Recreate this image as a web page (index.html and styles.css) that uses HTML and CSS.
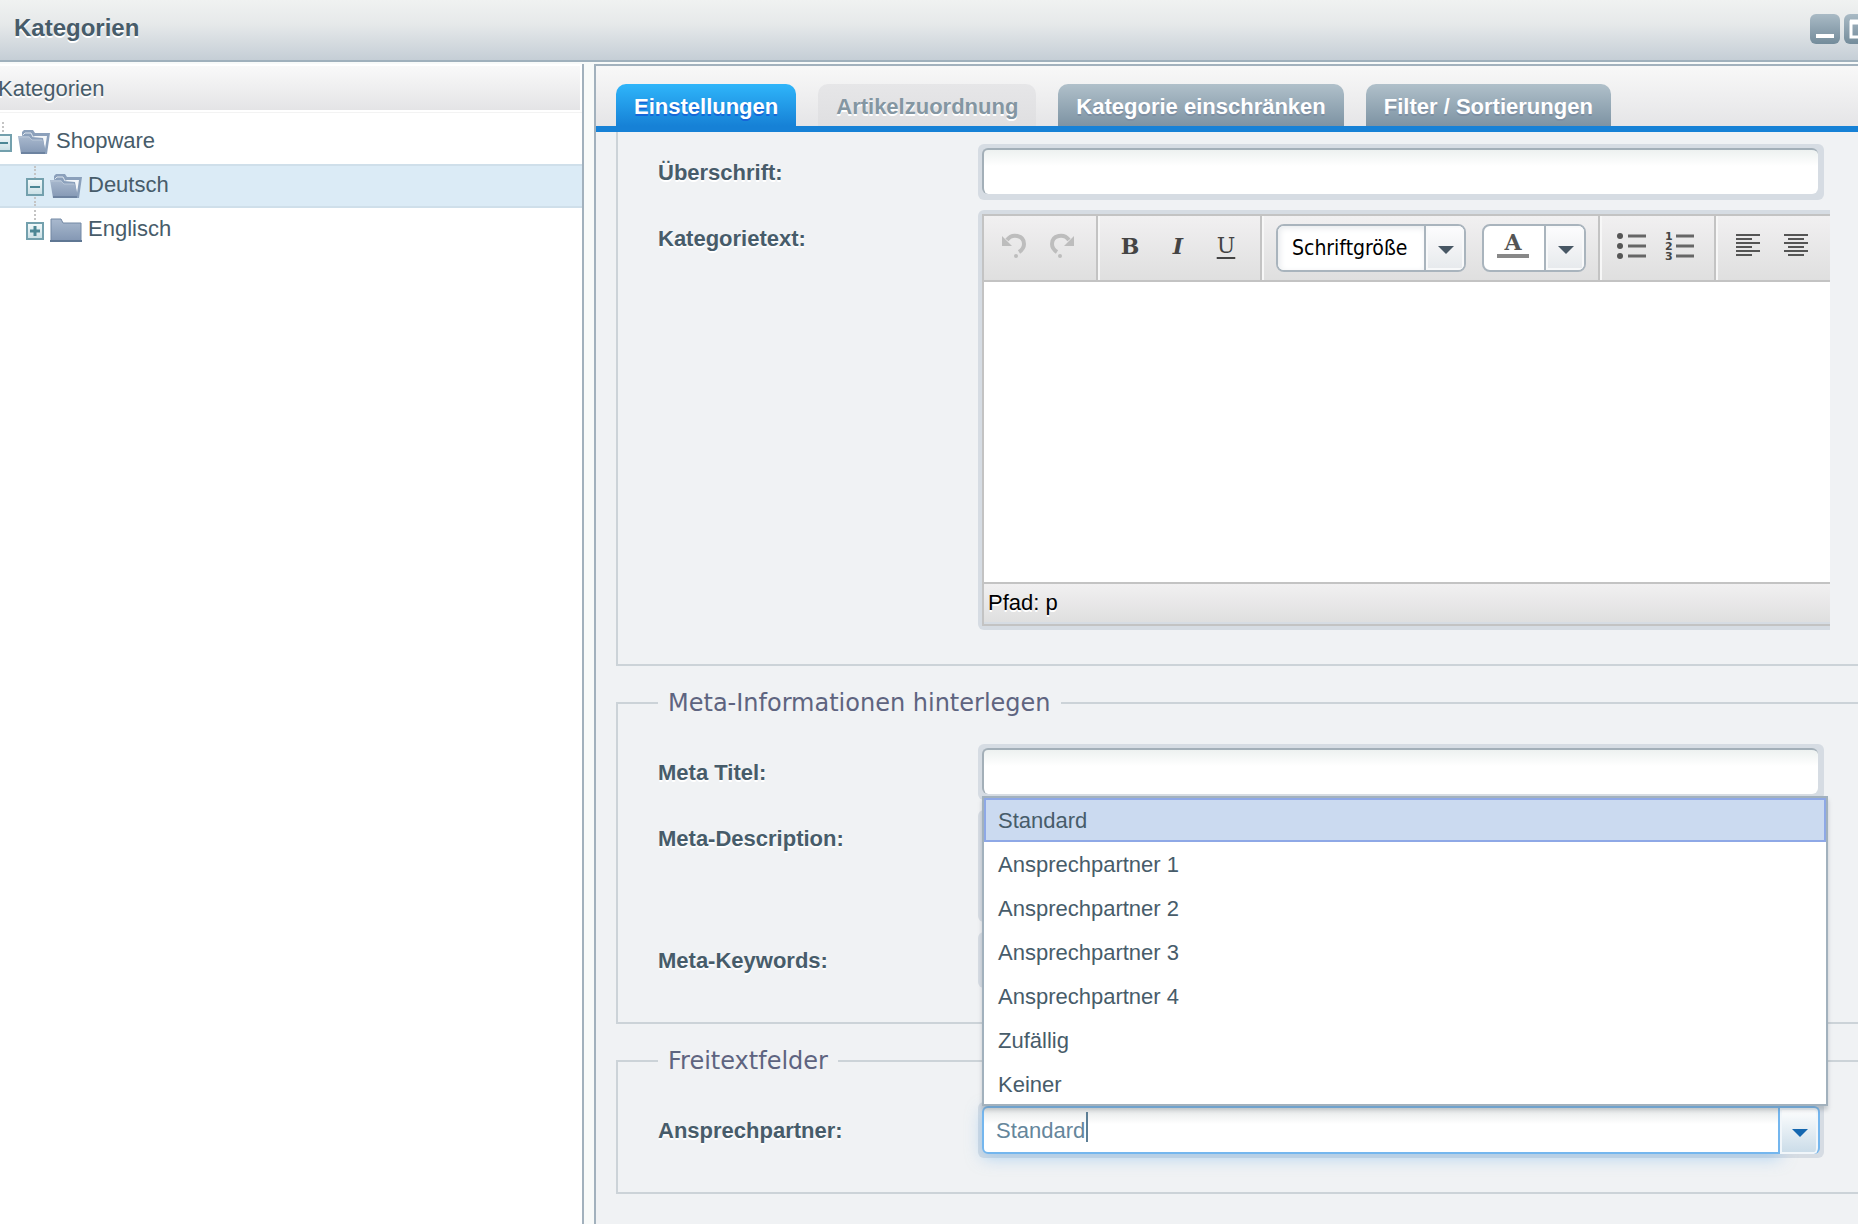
FILE: index.html
```html
<!DOCTYPE html>
<html lang="de">
<head>
<meta charset="utf-8">
<title>Kategorien</title>
<link rel="stylesheet" href="styles.css">
</head>
<body>
<svg class="defs" aria-hidden="true">
  <defs>
    <linearGradient id="folder-fill" x1="0" y1="0" x2="0" y2="1">
      <stop offset="0" stop-color="#a9b9ce"/><stop offset="1" stop-color="#8397b3"/>
    </linearGradient>
    <linearGradient id="toggle-fill" x1="0" y1="0" x2="0" y2="1">
      <stop offset="0" stop-color="#f4fafb"/><stop offset="1" stop-color="#c9dfe5"/>
    </linearGradient>
    <symbol id="folder-open" viewBox="0 0 32 26">
      <path d="M4 6V3l2-2h9l2 3h15l-3 21H12z" fill="#8ba0bb"/>
      <path d="M17 7h12l-2 13-2-11-11-1z" fill="#f4f7fa"/>
      <path d="M5 6l2-2h6l2 4" fill="none" stroke="#dde5ee" stroke-width="1"/>
      <path d="M0 7h11l3 4h11l2 9 0 5H3z" fill="url(#folder-fill)"/>
      <path d="M1 8h10l3 3h10" fill="none" stroke="#b9c7d8"/>
      <path d="M3 24h24" stroke="#6d83a0" stroke-width="2"/>
    </symbol>
    <symbol id="folder-closed" viewBox="0 0 32 26">
      <path d="M1 2h10l2 4h18v18H1z" fill="url(#folder-fill)" stroke="#7388a4"/>
      <path d="M0 24h32" stroke="#5f7793" stroke-width="2"/>
    </symbol>
    <symbol id="minus" viewBox="0 0 20 20">
      <rect x="2" y="2" width="16" height="16" fill="url(#toggle-fill)" stroke="#73a0ad" stroke-width="2"/>
      <path d="M5 10h10" stroke="#4c8795" stroke-width="2"/>
    </symbol>
    <symbol id="plus" viewBox="0 0 20 20">
      <rect x="2" y="2" width="16" height="16" fill="url(#toggle-fill)" stroke="#73a0ad" stroke-width="2"/>
      <path d="M5 10h10M10 5v10" stroke="#4c8795" stroke-width="3"/>
    </symbol>
    <symbol id="undo" viewBox="0 0 28 28">
      <path d="M7 8C12 1 24 3 24 12c0 4-2 6-5 8" fill="none" stroke="#bdbdbd" stroke-width="4"/>
      <path d="M2 4v10h10z" fill="#bdbdbd"/><circle cx="16" cy="24" r="2" fill="#bdbdbd"/>
    </symbol>
    <symbol id="arrow" viewBox="0 0 16 8">
      <path d="M0 0h16L8 8z" fill="currentColor"/>
    </symbol>
  </defs>
</svg>

<header class="titlebar">
  <h1 class="title">Kategorien</h1>
  <div class="window-tools">
    <button class="tool" type="button" aria-label="Minimieren"><svg viewBox="0 0 30 30"><path d="M6 22h18" stroke="#fff" stroke-width="4"/></svg></button>
    <button class="tool" type="button" aria-label="Maximieren"><svg viewBox="0 0 30 30"><path d="M7 8h16v15H7z" fill="none" stroke="#fff" stroke-width="3"/><path d="M6 8h18" stroke="#fff" stroke-width="5"/></svg></button>
  </div>
</header>

<div class="workspace">
  <nav class="sidebar">
    <h2 class="column-head">Kategorien</h2>
    <ul class="tree">
      <li class="node root"><svg class="toggle"><use href="#minus"/></svg><svg class="folder"><use href="#folder-open"/></svg><a class="node-link" href="#shopware">Shopware</a></li>
      <li class="node child through selected"><svg class="toggle"><use href="#minus"/></svg><svg class="folder"><use href="#folder-open"/></svg><a class="node-link" href="#deutsch">Deutsch</a></li>
      <li class="node child"><svg class="toggle"><use href="#plus"/></svg><svg class="folder"><use href="#folder-closed"/></svg><a class="node-link" href="#englisch">Englisch</a></li>
    </ul>
  </nav>

  <main class="panel">
    <div class="tabs" role="tablist">
      <button class="tab active" type="button" role="tab" aria-selected="true">Einstellungen</button>
      <button class="tab disabled" type="button" role="tab" disabled>Artikelzuordnung</button>
      <button class="tab" type="button" role="tab">Kategorie einschränken</button>
      <button class="tab" type="button" role="tab">Filter / Sortierungen</button>
    </div>

    <form class="form">
      <fieldset class="group continued">
        <div class="row">
          <label class="label" for="heading">Überschrift:</label>
          <div class="frame"><input class="text" id="heading" type="text"></div>
        </div>
        <div class="row">
          <label class="label" for="body-text">Kategorietext:</label>
          <div class="editor-frame">
            <div class="editor">
              <div class="toolbar">
                <div class="tool-group">
                  <button class="format" type="button" aria-label="Rückgängig"><svg class="icon"><use href="#undo"/></svg></button>
                  <button class="format" type="button" aria-label="Wiederholen"><svg class="icon mirrored"><use href="#undo"/></svg></button>
                </div>
                <div class="tool-group">
                  <button class="format bold" type="button">B</button>
                  <button class="format italic" type="button">I</button>
                  <button class="format underline" type="button">U</button>
                </div>
                <div class="tool-group pickers">
                  <div class="picker">
                    <select class="size-select" aria-label="Schriftgröße"><option>Schriftgröße</option></select>
                    <span class="picker-arrow"><svg class="arrow"><use href="#arrow"/></svg></span>
                  </div>
                  <div class="picker">
                    <button class="color" type="button" aria-label="Textfarbe"><span class="color-letter">A</span></button>
                    <button class="picker-arrow" type="button" aria-label="Farbe wählen"><svg class="arrow"><use href="#arrow"/></svg></button>
                  </div>
                </div>
                <div class="tool-group">
                  <button class="format" type="button" aria-label="Liste"><svg class="icon wide" viewBox="0 0 30 28"><g fill="#555"><circle cx="3" cy="4" r="3"/><circle cx="3" cy="14" r="3"/><circle cx="3" cy="24" r="3"/></g><path d="M11 4h18M11 14h18M11 24h18" stroke="#666" stroke-width="3"/></svg></button>
                  <button class="format" type="button" aria-label="Nummerierte Liste"><svg class="icon wide" viewBox="0 0 30 28"><g class="digits"><text x="0" y="8">1</text><text x="0" y="18">2</text><text x="0" y="28">3</text></g><path d="M11 4h18M11 14h18M11 24h18" stroke="#666" stroke-width="3"/></svg></button>
                </div>
                <div class="tool-group">
                  <button class="format" type="button" aria-label="Linksbündig"><svg class="icon" viewBox="0 0 28 28"><path d="M2 3h24M2 7h16M2 11h24M2 15h16M2 19h24M2 23h16" stroke="#555" stroke-width="2"/></svg></button>
                  <button class="format" type="button" aria-label="Zentriert"><svg class="icon" viewBox="0 0 28 28"><path d="M2 3h24M6 7h16M2 11h24M6 15h16M2 19h24M6 23h16" stroke="#555" stroke-width="2"/></svg></button>
                </div>
              </div>
              <textarea class="editor-area" id="body-text"></textarea>
              <div class="status">Pfad: p</div>
            </div>
          </div>
        </div>
      </fieldset>

      <fieldset class="group">
        <legend class="legend">Meta-Informationen hinterlegen</legend>
        <div class="row">
          <label class="label" for="meta-title">Meta Titel:</label>
          <div class="frame"><input class="text" id="meta-title" type="text"></div>
        </div>
        <div class="row">
          <label class="label" for="meta-description">Meta-Description:</label>
          <div class="frame"><textarea class="text tall" id="meta-description"></textarea></div>
        </div>
        <div class="row">
          <label class="label" for="meta-keywords">Meta-Keywords:</label>
          <div class="frame"><input class="text" id="meta-keywords" type="text"></div>
        </div>
      </fieldset>

      <fieldset class="group">
        <legend class="legend">Freitextfelder</legend>
        <div class="row">
          <label class="label" for="contact">Ansprechpartner:</label>
          <div class="combo">
            <input class="combo-input" id="contact" type="text" value="Standard" role="combobox" aria-expanded="true" aria-controls="contact-list">
            <span class="caret"></span>
            <button class="combo-button" type="button" aria-label="Liste öffnen"><svg class="arrow"><use href="#arrow"/></svg></button>
            <ul class="options" id="contact-list" role="listbox">
              <li class="option chosen" role="option" aria-selected="true">Standard</li>
              <li class="option" role="option">Ansprechpartner 1</li>
              <li class="option" role="option">Ansprechpartner 2</li>
              <li class="option" role="option">Ansprechpartner 3</li>
              <li class="option" role="option">Ansprechpartner 4</li>
              <li class="option" role="option">Zufällig</li>
              <li class="option" role="option">Keiner</li>
            </ul>
          </div>
        </div>
      </fieldset>
    </form>
  </main>
</div>
</body>
</html>
```
FILE: styles.css
```css
*, *::before, *::after { box-sizing: border-box; }

body {
  margin: 0;
  min-height: 100vh;
  display: flex;
  flex-direction: column;
  overflow: hidden;
  background: #f8faf9;
  color: #475c6a;
  font: 22px/26px "Liberation Sans", Arial, sans-serif;
}

button, input, textarea, select { margin: 0; font: inherit; color: inherit; border: 0; outline: 0; border-radius: 0; }
button { padding: 0; background: none; }
ul { margin: 0; padding: 0; list-style: none; }
svg { display: block; flex: none; }
.defs { position: absolute; width: 0; height: 0; }

/* Window title bar */
.titlebar {
  display: flex;
  align-items: center;
  height: 62px;
  padding: 0 0 2px 14px;
  overflow: hidden;
  border-bottom: 2px solid #9fb0bc;
  background: linear-gradient(#f0f2f1, #e6e9ea 40%, #c5ced6);
}
.title {
  flex: 1;
  margin: 0;
  padding-bottom: 2px;
  font-size: 24px;
  line-height: 28px;
  text-shadow: 0 2px 0 #fff;
}
.window-tools { display: flex; gap: 4px; margin-right: -16px; }
.tool { width: 30px; height: 30px; border-radius: 6px; background: linear-gradient(#a9bac5, #748c9b); }

.workspace {
  flex: 1;
  display: grid;
  grid-template-columns: 584px 1fr;
  column-gap: 10px;
  padding-top: 2px;
}

/* Category tree */
.sidebar { border-right: 2px solid #a2b1bd; background: #fff; }
.column-head {
  height: 48px;
  margin: 0;
  padding: 10px 0 0;
  border: solid #fff;
  border-width: 2px 2px 2px 0;
  background: linear-gradient(#f9f9f9, #e4e4e6);
  font-size: 22px;
  font-weight: 400;
  line-height: 26px;
  text-indent: -2px;
  text-shadow: 0 2px 0 #fff;
}
.tree { padding-top: 7px; border-top: 1px solid #f3f3f3; }
.node {
  display: flex;
  align-items: center;
  height: 44px;
  border: solid transparent;
  border-width: 2px 0;
}
.root { margin-left: -7px; }
.child { padding-left: 25px; }
.selected { border-color: #cfdfea; background-color: #dbebf6; }
.node::before {
  content: "";
  align-self: flex-start;
  height: 10px;
  margin-right: -11px;
  margin-left: 9px;
  border-left: 2px dotted #c4c4c4;
}
.through::before { height: 40px; }
.toggle { position: relative; width: 20px; height: 20px; margin: 2px 5px 0 0; }
.folder { width: 32px; height: 26px; margin-right: 6px; }
.node-link { margin-bottom: 2px; color: inherit; text-decoration: none; }

/* Right panel with tabs */
.panel {
  min-width: 0;
  border-top: 2px solid #a2b1bd;
  border-left: 2px solid #a2b1bd;
  background: #f0f2f4;
}
.tabs {
  display: flex;
  gap: 22px;
  height: 66px;
  padding: 18px 0 0 20px;
  border-bottom: 6px solid #1681d6;
  background: linear-gradient(#f8f8f8, #e5e5e7);
}
.tab {
  height: 42px;
  padding: 3px 18px 0;
  border-radius: 10px 10px 0 0;
  background: linear-gradient(#b0c0ca, #7d93a3);
  color: #fff;
  font-weight: 700;
  text-shadow: 0 2px 0 #7d8fa3;
  white-space: nowrap;
}
.active { background: linear-gradient(#2fb5fa, #1681d6); text-shadow: 0 2px 0 #1666d8; }
.disabled { background: linear-gradient(#e6e6e8, #dfdfe1); color: #8496a2; text-shadow: 0 2px 0 #fff; }

/* Form groups */
.form { padding-left: 20px; }
.group {
  min-width: 0;
  margin: 0 0 23px;
  padding: 27px 34px 34px 40px;
  border: 2px solid #ccd3d8;
  border-right: 0;
}
.continued { padding-top: 12px; border-top: 0; }
.legend {
  padding: 0 10px;
  color: #5e6480;
  font-family: "DejaVu Sans", Verdana, sans-serif;
  font-size: 24px;
  line-height: 28px;
}
.row { display: grid; grid-template-columns: 320px 1fr; }
.row + .row { margin-top: 10px; }
.label { padding-top: 16px; font-weight: 700; text-shadow: 0 2px 0 #fff; }
.frame { padding: 4px 6px 6px 4px; border-radius: 6px; background: #d6dce3; }
.text {
  display: block;
  width: 100%;
  height: 46px;
  padding: 0 12px;
  border: solid #a3afb8;
  border-width: 2px 0 0 2px;
  border-radius: 6px;
  background: linear-gradient(#edf1f0, #fff 16px);
}
.tall { height: 102px; resize: none; }

/* Rich text editor */
.editor-frame { margin-right: -6px; padding: 4px 0 4px 4px; border-radius: 6px 0 0 6px; background: #d6dce3; }
.editor { border: 2px solid #c3c3c3; border-right: 0; overflow: hidden; }
.toolbar {
  display: flex;
  height: 66px;
  border-bottom: 2px solid #c3c3c3;
  background: linear-gradient(#f1f0f1, #dfdfdf);
}
.tool-group {
  display: flex;
  align-items: center;
  padding: 0 10px 4px 6px;
  border-right: 2px solid #c3c3c3;
}
.tool-group + .tool-group { border-left: 2px solid #f7f7f7; }
.tool-group:last-child { border-right: 0; }
.format {
  display: flex;
  align-items: center;
  justify-content: center;
  width: 48px;
  height: 48px;
  color: #444;
  font-family: "DejaVu Serif", serif;
}
.bold { font-weight: 700; }
.italic { font-style: italic; font-weight: 700; }
.underline { text-decoration: underline; text-underline-offset: 4px; text-decoration-thickness: 2px; }
.icon { width: 28px; height: 28px; }
.wide { width: 30px; overflow: visible; }
.mirrored { transform: scaleX(-1); }
.digits { fill: #444; font: 700 11px "DejaVu Sans", sans-serif; }
.tool-group.pickers { gap: 16px; padding: 0 12px; }
.picker {
  display: flex;
  height: 48px;
  overflow: hidden;
  border: 2px solid #a9b4bd;
  border-radius: 8px;
  background: #fff;
}
.size-select {
  width: 146px;
  padding: 0 0 0 14px;
  appearance: none;
  background: #fff;
  color: #000;
  font-family: "DejaVu Sans Condensed", "DejaVu Sans", Tahoma, sans-serif;
  font-stretch: condensed;
  font-size: 21px;
  box-shadow: inset 2px 2px 6px #e6e9ec;
}
.picker-arrow {
  display: flex;
  align-items: center;
  justify-content: center;
  width: 40px;
  padding-left: 2px;
  border-left: 2px solid #a9b4bd;
  background: linear-gradient(#fdfdfe, #e6e9ec);
  box-shadow: inset 0 0 0 2px #f8f9fa;
  color: #475764;
}
.arrow { width: 16px; height: 8px; margin-top: 4px; }
.color {
  display: flex;
  align-items: flex-start;
  justify-content: center;
  width: 60px;
  padding: 6px 2px 0 0;
}
.color-letter {
  width: 32px;
  height: 26px;
  border-bottom: 4px solid #888;
  color: #555;
  font: 700 22px/20px "DejaVu Serif", serif;
}
.editor-area { display: block; width: 100%; height: 300px; padding: 8px; resize: none; background: #fff; }
.status {
  height: 42px;
  padding: 6px 4px;
  border-top: 2px solid #c3c3c3;
  border-bottom: 2px solid #d6dce3;
  background: linear-gradient(#f1f0f1, #dfdfdf);
  color: #000;
  text-shadow: 0 2px 0 #fff;
}

/* Open combo box */
.combo {
  position: relative;
  display: flex;
  padding: 4px;
  border-radius: 6px;
  background: #d6dce3;
}
.combo-input {
  flex: 1;
  min-width: 0;
  height: 48px;
  padding: 2px 12px 0;
  border: 2px solid #74b6ee;
  border-radius: 6px 0 0 6px;
  background: linear-gradient(#e3e6e6, #fff 16px);
  box-shadow: 0 4px 16px rgba(116, 182, 238, .5);
  color: #65869b;
}
.caret { position: absolute; top: 10px; left: 108px; width: 2px; height: 30px; background: #5d7f96; }
.combo-button {
  display: flex;
  align-items: center;
  justify-content: center;
  width: 40px;
  height: 48px;
  padding-left: 2px;
  border: solid #74b6ee;
  border-width: 2px 2px 0 0;
  border-radius: 0 6px 6px 0;
  background: linear-gradient(#fff, #c9dbe8);
  box-shadow: inset 0 0 0 2px #f1f6fa;
  color: #1467b0;
}
.options {
  position: absolute;
  right: -4px;
  bottom: 52px;
  left: 4px;
  border: 2px solid #a2b1bd;
  background: #fff;
  box-shadow: 0 4px 4px rgba(100, 110, 120, .3);
}
.option { height: 44px; padding: 8px 12px; border: 2px solid transparent; }
.option:last-child { height: 42px; }
.chosen { border-color: #8ea8e6; background: #cbdaf0; }
```
